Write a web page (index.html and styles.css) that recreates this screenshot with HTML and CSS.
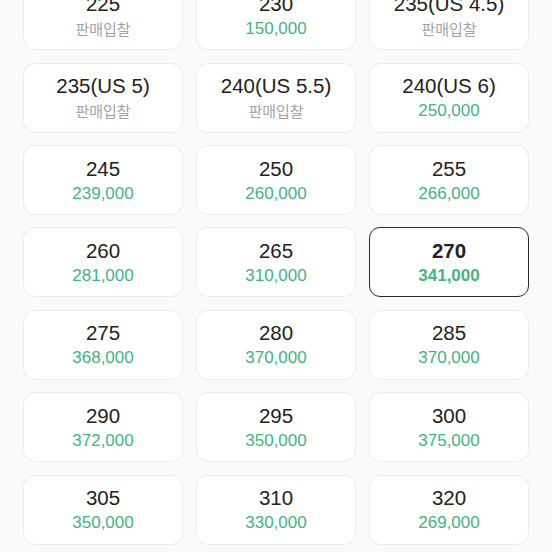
FILE: index.html
```html
<!DOCTYPE html>
<html lang="ko">
<head>
    <meta charset="UTF-8">
    <meta name="viewport" content="width=device-width, initial-scale=1.0">
    <title>사이즈 선택</title>
    <link rel="stylesheet" href="styles.css">
</head>
<body>
    <div class="size-list">
        <div class="size-item"><span class="size">225</span><span class="price empty">판매입찰</span></div>
        <div class="size-item"><span class="size">230</span><span class="price">150,000</span></div>
        <div class="size-item"><span class="size">235(US 4.5)</span><span class="price empty">판매입찰</span></div>

        <div class="size-item"><span class="size">235(US 5)</span><span class="price empty">판매입찰</span></div>
        <div class="size-item"><span class="size">240(US 5.5)</span><span class="price empty">판매입찰</span></div>
        <div class="size-item"><span class="size">240(US 6)</span><span class="price">250,000</span></div>

        <div class="size-item"><span class="size">245</span><span class="price">239,000</span></div>
        <div class="size-item"><span class="size">250</span><span class="price">260,000</span></div>
        <div class="size-item"><span class="size">255</span><span class="price">266,000</span></div>

        <div class="size-item"><span class="size">260</span><span class="price">281,000</span></div>
        <div class="size-item"><span class="size">265</span><span class="price">310,000</span></div>
        <div class="size-item selected"><span class="size">270</span><span class="price">341,000</span></div>

        <div class="size-item"><span class="size">275</span><span class="price">368,000</span></div>
        <div class="size-item"><span class="size">280</span><span class="price">370,000</span></div>
        <div class="size-item"><span class="size">285</span><span class="price">370,000</span></div>

        <div class="size-item"><span class="size">290</span><span class="price">372,000</span></div>
        <div class="size-item"><span class="size">295</span><span class="price">350,000</span></div>
        <div class="size-item"><span class="size">300</span><span class="price">375,000</span></div>

        <div class="size-item"><span class="size">305</span><span class="price">350,000</span></div>
        <div class="size-item"><span class="size">310</span><span class="price">330,000</span></div>
        <div class="size-item"><span class="size">320</span><span class="price">269,000</span></div>
    </div>
</body>
</html>
```

FILE: styles.css
```css
body {
    font-family: "Liberation Sans", "Noto Sans CJK KR", Arial, sans-serif;
    margin: 0;
    padding: 0;
    background-color: #fafafa;
    overflow: hidden;
}

.size-list {
    display: grid;
    grid-template-columns: repeat(3, 160px);
    column-gap: 13px;
    row-gap: 12.4px;
    padding: 0 23px;
    margin-top: -19.7px;
}

.size-item {
    box-sizing: border-box;
    height: 70px;
    background-color: #fff;
    border: 1px solid #ececec;
    border-radius: 12px;
    display: flex;
    flex-direction: column;
    align-items: center;
    justify-content: center;
}

.size {
    font-size: 20.5px;
    line-height: 24px;
    color: #222;
}

.price {
    margin-top: 2px;
    font-size: 17px;
    line-height: 21px;
    color: #43b387;
}

.price.empty {
    font-family: "Noto Sans CJK KR", sans-serif;
    font-size: 15px;
    color: #a3a3a3;
}

.selected {
    border: 1.5px solid #2a2a2a;
    border-radius: 11px;
}

.selected .size,
.selected .price {
    font-weight: bold;
}
```
